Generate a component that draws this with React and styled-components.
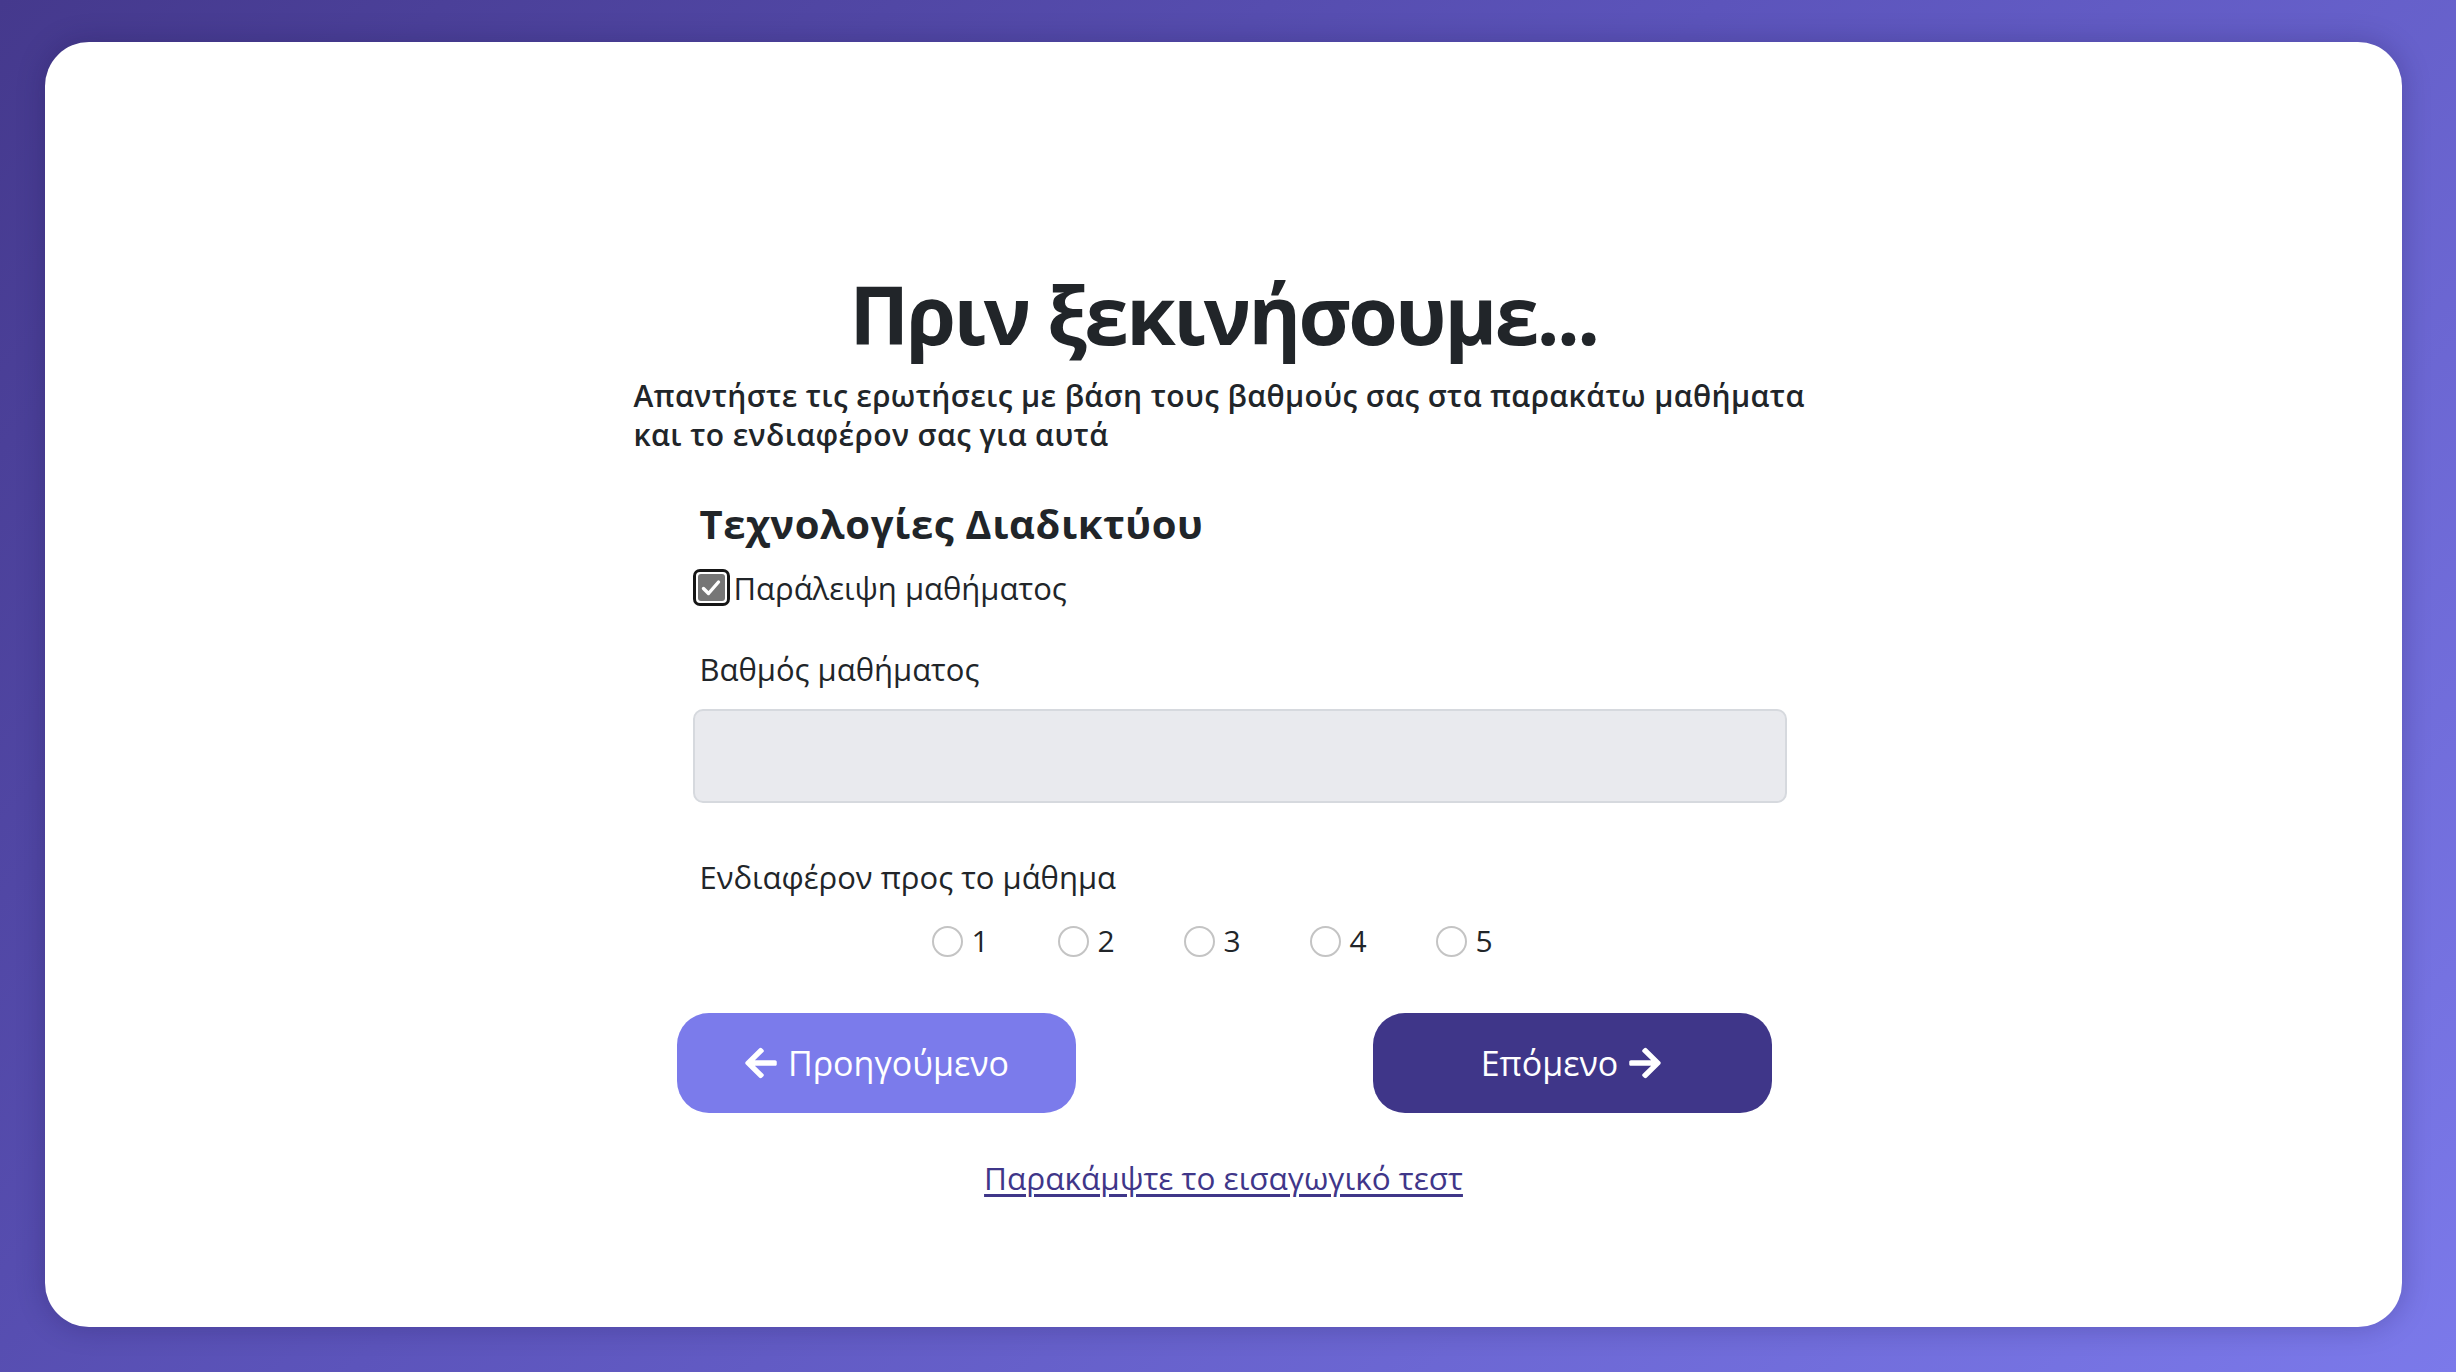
import React, { useState } from "react";
import styled, { createGlobalStyle } from "styled-components";
import { FaArrowLeft, FaArrowRight } from "react-icons/fa";

const GlobalStyle = createGlobalStyle`
  html, body {
    margin: 0;
    height: 100%;
  }
  body {
    font-family: "Open Sans", "Noto Sans", sans-serif;
    color: #212529;
    background: linear-gradient(135deg, #45398d 0%, #5c54bb 45%, #7b79ea 100%);
  }
  #root {
    height: 100%;
  }
`;

const Page = styled.div`
  box-sizing: border-box;
  height: 100%;
  padding: 42px 54px 45px 45px;
`;

const Card = styled.div`
  box-sizing: border-box;
  height: 100%;
  background: #ffffff;
  border-radius: 44px;
  box-shadow: 0 0 28px rgba(20, 10, 60, 0.25);
  padding-top: 222px;
  display: flex;
  justify-content: center;
`;

const Container = styled.div`
  width: 1180px;
  display: flex;
  flex-direction: column;
`;

const Title = styled.h1`
  margin: 0;
  font-size: 80px;
  line-height: 100px;
  font-weight: 700;
  text-align: center;
  letter-spacing: -2.5px;
`;

const Subtitle = styled.h5`
  margin: 12px 0 0;
  font-size: 30px;
  line-height: 39px;
  font-weight: 600;
  letter-spacing: 0.4px;
`;

const Form = styled.form`
  margin: 45px 27px 0 59px;
  display: flex;
  flex-direction: column;
`;

const CourseName = styled.h3`
  margin: 0 0 0 7px;
  font-size: 40px;
  line-height: 50px;
  font-weight: 700;
  letter-spacing: 0.6px;
`;

const CheckRow = styled.label`
  margin-top: 20px;
  display: flex;
  align-items: center;
  font-size: 31px;
  line-height: 36px;
  cursor: pointer;
`;

const CheckBox = styled.span`
  box-sizing: border-box;
  width: 37px;
  height: 37px;
  margin-right: 4px;
  border: 3px solid #161616;
  border-radius: 7px;
  padding: 2px;
  background: #ffffff;
  display: flex;
`;

const CheckFill = styled.span`
  flex: 1;
  border-radius: 3px;
  background: ${(p) => (p.checked ? "#767676" : "#ffffff")};
  display: flex;
  align-items: center;
  justify-content: center;
`;

const FieldLabel = styled.div`
  margin: ${(p) => p.top}px 0 0 7px;
  font-size: 31px;
  line-height: 36px;
`;

const GradeInput = styled.input`
  box-sizing: border-box;
  margin-top: 22px;
  width: 100%;
  height: 94px;
  border: 2px solid #d6d9de;
  border-radius: 10px;
  background: #e9eaee;
  font-size: 31px;
  padding: 0 20px;
  outline: none;
`;

const RadioRow = styled.div`
  margin-top: 28px;
  display: flex;
  justify-content: center;
`;

const RadioItem = styled.label`
  width: 126px;
  display: flex;
  align-items: center;
  font-size: 30px;
  line-height: 36px;
  cursor: pointer;
`;

const Radio = styled.input`
  appearance: none;
  box-sizing: border-box;
  width: 31px;
  height: 31px;
  margin: 0 9px 0 7px;
  border: 2px solid #c4c4c4;
  border-radius: 50%;
  background: #ffffff;
  &:checked {
    border: 9px solid #3f3689;
  }
`;

const Buttons = styled.div`
  margin: 54px 42px 0 43px;
  display: flex;
  justify-content: space-between;
`;

const NavButton = styled.button`
  width: 399px;
  height: 100px;
  border: none;
  border-radius: 32px;
  background: ${(p) => (p.dark ? "#3f3689" : "#7b7beb")};
  color: #ffffff;
  font-family: "Open Sans", "Noto Sans", sans-serif;
  font-size: 34px;
  display: flex;
  align-items: center;
  justify-content: center;
  gap: 9px;
  cursor: pointer;
  svg {
    font-size: 36px;
  }
`;

const SkipLink = styled.a`
  margin-top: 47px;
  align-self: center;
  font-size: 31.5px;
  line-height: 36px;
  color: #3f3689;
  text-decoration: underline;
  text-underline-offset: 4px;
  cursor: pointer;
`;

export default function App() {
  const [skip, setSkip] = useState(true);
  const [interest, setInterest] = useState(null);

  return (
    <>
      <GlobalStyle />
      <Page>
        <Card>
          <Container>
            <Title>Πριν ξεκινήσουμε...</Title>
            <Subtitle>
              Απαντήστε τις ερωτήσεις με βάση τους βαθμούς σας στα παρακάτω μαθήματα και
              το ενδιαφέρον σας για αυτά
            </Subtitle>

            <Form onSubmit={(e) => e.preventDefault()}>
              <CourseName>Τεχνολογίες Διαδικτύου</CourseName>

              <CheckRow onClick={() => setSkip(!skip)}>
                <CheckBox>
                  <CheckFill checked={skip}>
                    {skip && (
                      <svg width="20" height="18" viewBox="0 0 20 18">
                        <path
                          d="M2.5 9.5 L7.5 14.5 L17.5 3"
                          fill="none"
                          stroke="#ffffff"
                          strokeWidth="3.4"
                          strokeLinecap="round"
                          strokeLinejoin="round"
                        />
                      </svg>
                    )}
                  </CheckFill>
                </CheckBox>
                Παράλειψη μαθήματος
              </CheckRow>

              <FieldLabel top={45}>Βαθμός μαθήματος</FieldLabel>
              <GradeInput type="number" disabled={skip} />

              <FieldLabel top={56}>Ενδιαφέρον προς το μάθημα</FieldLabel>
              <RadioRow>
                {[1, 2, 3, 4, 5].map((n) => (
                  <RadioItem key={n}>
                    <Radio
                      type="radio"
                      name="interest"
                      checked={interest === n}
                      onChange={() => setInterest(n)}
                    />
                    {n}
                  </RadioItem>
                ))}
              </RadioRow>
            </Form>

            <Buttons>
              <NavButton type="button">
                <FaArrowLeft />
                Προηγούμενο
              </NavButton>
              <NavButton type="button" dark>
                Επόμενο
                <FaArrowRight />
              </NavButton>
            </Buttons>

            <SkipLink>Παρακάμψτε το εισαγωγικό τεστ</SkipLink>
          </Container>
        </Card>
      </Page>
    </>
  );
}
